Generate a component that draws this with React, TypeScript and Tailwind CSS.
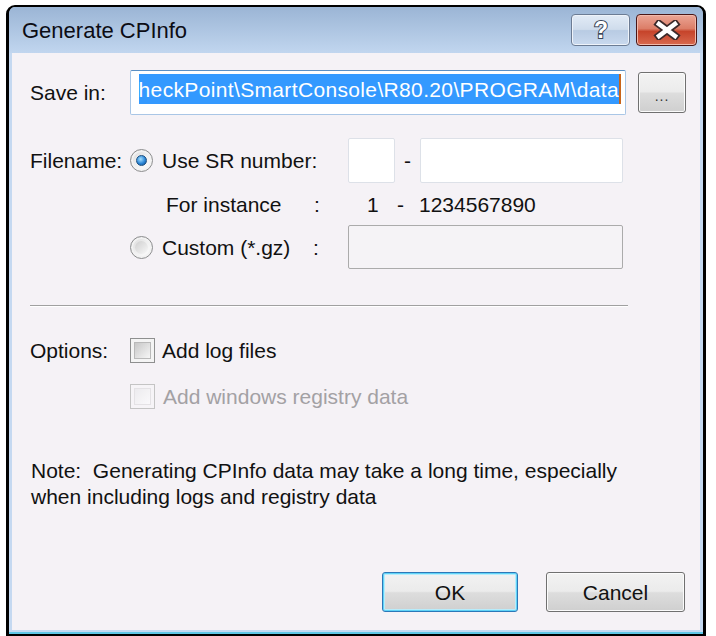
import React from "react";

function Radio({ checked }: { checked?: boolean }) {
  return (
    <span className="w-[23px] h-[23px] shrink-0 rounded-full border border-[#8b8c8d] bg-gradient-to-br from-[#d9d9d9] via-[#f0f0f0] to-[#ffffff] flex items-center justify-center shadow-[inset_0_0_0_2px_#f2f2f2]">
      {checked ? (
        <span className="w-[11px] h-[11px] rounded-full border border-[#1b4f80] bg-[radial-gradient(circle_at_40%_35%,#a6e1ff,#2b86d6_55%,#0f4d8a)]" />
      ) : (
        <span className="w-[13px] h-[13px] rounded-full bg-gradient-to-br from-[#cfcfcf] to-[#f8f8f8]" />
      )}
    </span>
  );
}

function Check({ disabled }: { disabled?: boolean }) {
  return (
    <span
      className={
        "w-[25px] h-[25px] shrink-0 border p-[3px] " +
        (disabled ? "border-[#c4c4c4] bg-[#f6f4f7]" : "border-[#8e8f8f] bg-[#f4f4f4]")
      }
    >
      <span
        className={
          "block w-full h-full border " +
          (disabled
            ? "border-[#e4e2e5] bg-gradient-to-br from-[#ecebee] to-[#faf9fb]"
            : "border-[#b9b9b9] bg-gradient-to-br from-[#c8c8c8] to-[#f6f6f6]")
        }
      />
    </span>
  );
}

export default function App() {
  return (
    <div className="w-[716px] h-[636px] bg-white pt-[5px] pl-[6px] font-['Liberation_Sans',Arial,sans-serif] text-[21px] text-[#111] leading-none overflow-hidden">
      <div className="w-[700px] h-[631px] flex flex-col rounded-t-[9px] border-t-2 border-l-[3px] border-r-[3px] border-b-2 border-black overflow-hidden bg-[#c5d9f1]">
        {/* Title bar */}
        <div className="h-[46px] shrink-0 flex items-center bg-gradient-to-b from-[#9bb5d5] to-[#c1d6ef] pl-[13px] pr-[6px]">
          <span className="text-[22px] text-[#0c0c14] mt-[2px]">Generate CPInfo</span>
          <div className="ml-auto flex items-start gap-[6px] self-start mt-[7px]">
            <div className="w-[59px] h-[32px] rounded-[4px] border border-[#6c7c94] bg-[linear-gradient(to_bottom,#e2ebf6_0%,#cfdcec_48%,#b8cbe3_52%,#c9d9ee_100%)] shadow-[inset_0_0_0_1px_#eef3fa] flex items-center justify-center">
              <svg width="22" height="26" viewBox="0 0 22 26">
                <text
                  x="11"
                  y="21"
                  textAnchor="middle"
                  fontFamily="Liberation Sans, Arial, sans-serif"
                  fontWeight="bold"
                  fontSize="23"
                  fill="#ffffff"
                  stroke="#3b4658"
                  strokeWidth="2"
                  paintOrder="stroke"
                >
                  ?
                </text>
              </svg>
            </div>
            <div className="w-[61px] h-[32px] rounded-[4px] border border-[#4a1616] bg-[linear-gradient(to_bottom,#eba595_0%,#dc7e68_45%,#c6442b_55%,#d8694f_100%)] shadow-[inset_0_0_0_1px_#f1b9ab] flex items-center justify-center">
              <svg width="28" height="20" viewBox="0 0 28 20">
                <path d="M6 4 L22 16 M22 4 L6 16" stroke="#3c2a2a" strokeWidth="8" strokeLinecap="square" />
                <path d="M6 4 L22 16 M22 4 L6 16" stroke="#ffffff" strokeWidth="4.5" strokeLinecap="square" />
              </svg>
            </div>
          </div>
        </div>

        {/* Body frame */}
        <div className="flex-1 px-[3px] pb-[2px] border-b-2 border-[#5fc6e6] bg-[#c5d9f1]">
          <div className="h-full bg-[#f5f2f6] flex flex-col pl-[18px]">
            {/* Save in row */}
            <div className="mt-[17px] h-[45px] flex items-center">
              <span className="w-[100px]">Save in:</span>
              <div className="w-[496px] h-[45px] rounded-[2px] border border-[#a9c6e6] border-t-[#5b8fc3] bg-white pl-[4px] pr-[4px] pt-[3px] flex justify-end overflow-hidden">
                <div className="flex h-[30px] items-center whitespace-nowrap bg-[#3399ff] text-white tracking-[0.35px]">
                  <span>heckPoint\SmartConsole\R80.20\PROGRAM\data</span>
                </div>
                <span className="w-[2px] h-[30px] bg-[#c8641a] shrink-0" />
              </div>
              <div className="ml-[12px] w-[48px] h-[41px] rounded-[3px] border border-[#707070] bg-[linear-gradient(to_bottom,#f3f3f3_0%,#ebebeb_48%,#dddddd_52%,#cfcfcf_100%)] shadow-[inset_0_0_0_1px_#fbfbfb] flex items-center justify-center">
                <span className="text-[14px] text-[#333] tracking-[1px] mt-[6px]">...</span>
              </div>
            </div>

            {/* Filename row */}
            <div className="mt-[23px] h-[45px] flex items-center">
              <span className="w-[100px]">Filename:</span>
              <Radio checked />
              <span className="ml-[9px] w-[186px]">Use SR number:</span>
              <div className="w-[47px] h-[45px] rounded-[2px] border border-[#dde1e8] bg-white" />
              <span className="w-[25px] text-center">-</span>
              <div className="w-[203px] h-[45px] rounded-[2px] border border-[#dde1e8] bg-white" />
            </div>

            {/* For instance row */}
            <div className="mt-[8px] h-[26px] flex items-center">
              <span className="ml-[136px] w-[148px]">For instance</span>
              <span className="w-[53px]">:</span>
              <span className="w-[30px]">1</span>
              <span className="w-[22px]">-</span>
              <span>1234567890</span>
            </div>

            {/* Custom row */}
            <div className="mt-[8px] h-[44px] flex items-center">
              <span className="w-[100px]" />
              <Radio />
              <span className="ml-[9px] w-[151px]">Custom (*.gz)</span>
              <span className="w-[35px]">:</span>
              <div className="w-[275px] h-[44px] rounded-[2px] border border-[#ababab] bg-[#f5f3f6]" />
            </div>

            {/* Separator */}
            <div className="mt-[36px] w-[598px] h-[2px] border-t border-[#a0a0a0] border-b border-b-white" />

            {/* Options */}
            <div className="mt-[31px] h-[25px] flex items-center">
              <span className="w-[100px]">Options:</span>
              <Check />
              <span className="ml-[7px]">Add log files</span>
            </div>
            <div className="mt-[21px] h-[25px] flex items-center">
              <span className="w-[100px]" />
              <Check disabled />
              <span className="ml-[8px] text-[#a3a1a4]">Add windows registry data</span>
            </div>

            {/* Note */}
            <div className="mt-[49px] pl-[1px] leading-[26px]">
              <div>Note:&nbsp; Generating CPInfo data may take a long time, especially</div>
              <div>when including logs and registry data</div>
            </div>

            {/* Buttons */}
            <div className="mt-auto mb-[18px] flex justify-end pr-[15px] gap-[28px]">
              <div className="w-[136px] h-[40px] rounded-[3px] border border-[#2c78b8] bg-[linear-gradient(to_bottom,#f2f2f2_0%,#ebebeb_48%,#dddddd_52%,#cfcfcf_100%)] shadow-[inset_0_0_0_1px_#5fd3f7,inset_0_0_0_2px_#b8ecfb] flex items-center justify-center">
                <span>OK</span>
              </div>
              <div className="w-[139px] h-[40px] rounded-[3px] border border-[#707070] bg-[linear-gradient(to_bottom,#f2f2f2_0%,#ebebeb_48%,#dddddd_52%,#cfcfcf_100%)] shadow-[inset_0_0_0_1px_#fbfbfb] flex items-center justify-center">
                <span>Cancel</span>
              </div>
            </div>
          </div>
        </div>
      </div>
    </div>
  );
}
